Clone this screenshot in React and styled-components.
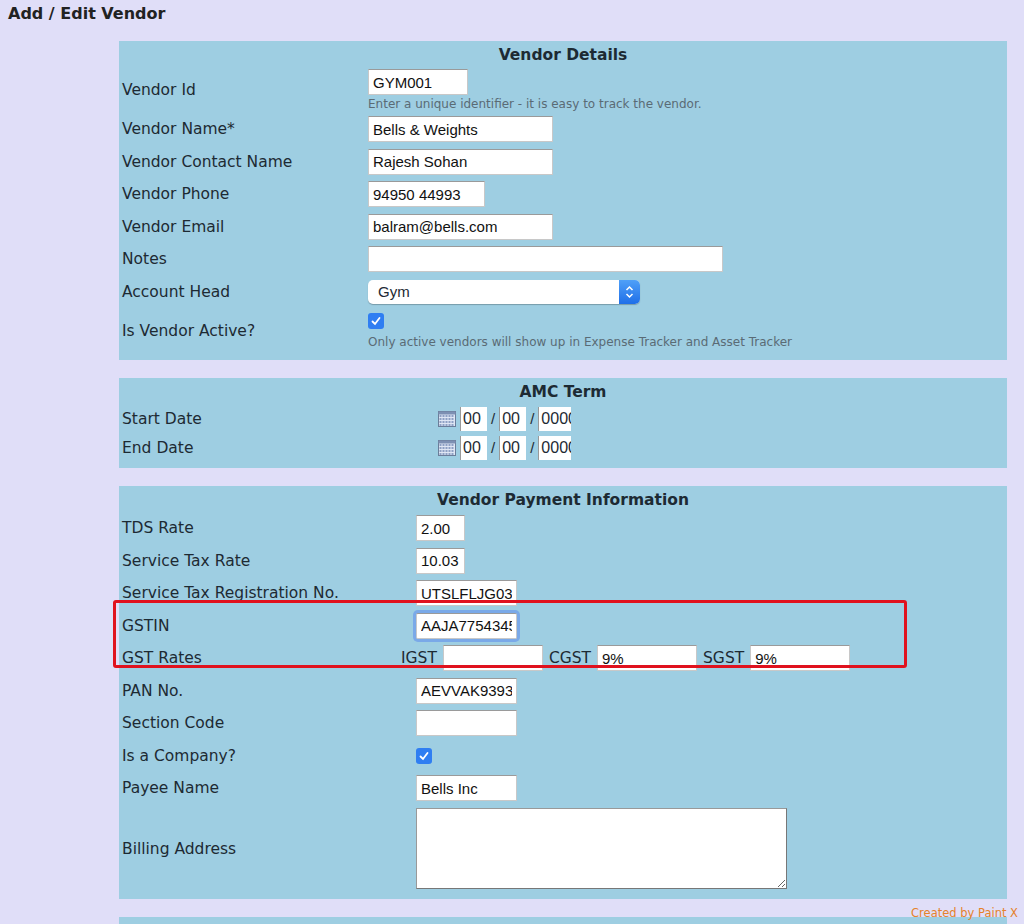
import React from 'react'
import styled, { createGlobalStyle } from 'styled-components'

const Global = createGlobalStyle`
  body {
    margin: 0;
    background: #e0def8;
    font-family: "DejaVu Sans", Verdana, sans-serif;
    color: #1d2a33;
  }
`

const Page = styled.div`
  position: relative;
  padding: 4px 0 0 8px;
  height: 920px;
  overflow: hidden;
`

const Heading = styled.div`
  font-size: 16px;
  font-weight: bold;
  color: #222;
  height: 37px;
`

const Panels = styled.div`
  margin-left: 111px;
  width: 888px;
  display: flex;
  flex-direction: column;
  gap: 18px;
`

const Panel = styled.div`
  background: #9ecee2;
  padding: 2px 3px 6px 3px;
  display: grid;
  grid-template-columns: ${p => p.labelWidth}px 1fr;
  align-items: center;
`

const Title = styled.div`
  grid-column: 1 / 3;
  text-align: center;
  font-weight: bold;
  font-size: 15.5px;
  height: 24px;
  line-height: 24px;
`

const Label = styled.div`
  font-size: 15.5px;
  min-height: ${p => p.h || 32.5}px;
  display: flex;
  align-items: center;
`

const Field = styled.div`
  display: flex;
  flex-direction: column;
  justify-content: center;
  min-height: ${p => p.h || 32.5}px;
`

const Input = styled.input`
  width: ${p => p.w}px;
  height: 26px;
  box-sizing: border-box;
  border: 1px solid #c8c8c8;
  border-top-color: #9a9a9a;
  background: #fff;
  font-family: "Liberation Sans", Arial, sans-serif;
  font-size: 15px;
  padding: 0 4px;
  color: #111;
  outline: none;
  box-shadow: ${p => (p.focus ? '0 0 0 3px #7aa9e8' : 'none')};
  border-radius: ${p => (p.focus ? '2px' : '0')};
`

const Hint = styled.div`
  font-size: 12px;
  color: #5a6b75;
  margin-top: ${p => p.mt || 2}px;
`

const Select = styled.div`
  width: 272px;
  height: 24px;
  background: #fff;
  border-radius: 5px;
  display: flex;
  align-items: center;
  justify-content: space-between;
  font-family: "Liberation Sans", Arial, sans-serif;
  font-size: 15px;
  padding-left: 10px;
  box-sizing: border-box;
  box-shadow: 0 1px 1px rgba(0, 0, 0, 0.25);
  overflow: hidden;
`

const SelectArrow = styled.div`
  width: 21px;
  height: 100%;
  background: linear-gradient(#4fa0f8, #1f6fe8);
  display: flex;
  align-items: center;
  justify-content: center;
`

const Check = styled.div`
  width: 16px;
  height: 16px;
  border-radius: 3px;
  background: #2f7ef2;
  display: flex;
  align-items: center;
  justify-content: center;
`

const DateRow = styled.div`
  display: flex;
  align-items: center;
  gap: 4px;
  font-family: "Liberation Sans", Arial, sans-serif;
  font-size: 15px;
`

const DatePart = styled.div`
  background: #fff;
  height: 24px;
  width: ${p => p.w}px;
  border-left: 1px solid #999;
  line-height: 24px;
  padding-left: 2px;
  overflow: hidden;
  font-size: 16px;
`

const Gst = styled.div`
  display: flex;
  align-items: center;
  gap: 6px;
  font-size: 15.5px;
  margin-left: -15px;
`

const TextArea = styled.textarea`
  width: 371px;
  height: 81px;
  box-sizing: border-box;
  border: 1px solid #999;
  border-right-color: #777;
  border-bottom-color: #777;
  resize: both;
`

const Highlight = styled.div`
  position: absolute;
  left: 113px;
  top: 600px;
  width: 788px;
  height: 62px;
  border: 3px solid #e0121e;
  border-radius: 3px;
  pointer-events: none;
`

const Credit = styled.div`
  position: absolute;
  right: 6px;
  top: 906px;
  font-size: 11.5px;
  color: #e5822c;
`

const Tick = () => (
  <Check>
    <svg width='12' height='12' viewBox='0 0 12 12'>
      <path d='M2.5 6.5 L5 9 L9.5 3' stroke='#fff' strokeWidth='1.8' fill='none' strokeLinecap='round' />
    </svg>
  </Check>
)

const CalIcon = () => (
  <svg width='18' height='16' viewBox='0 0 18 16'>
    <rect x='0.5' y='0.5' width='17' height='15' fill='#dfe6f4' stroke='#6b7d99' />
    <rect x='0.5' y='0.5' width='17' height='3' fill='#7d90b3' />
    {[4, 7, 10, 13].map(y =>
      [3, 6, 9, 12, 15].map(x => (
        <rect key={x + '-' + y} x={x - 1.5} y={y} width='2' height='2' fill='#8ea0c4' />
      ))
    )}
  </svg>
)

const DateField = () => (
  <DateRow>
    <CalIcon />
    <DatePart w={24}>00</DatePart>
    <span>/</span>
    <DatePart w={24}>00</DatePart>
    <span>/</span>
    <DatePart w={30}>0000</DatePart>
  </DateRow>
)

export default function App () {
  return (
    <Page>
      <Global />
      <Heading>Add / Edit Vendor</Heading>
      <Panels>
        <Panel labelWidth={246}>
          <Title>Vendor Details</Title>
          <Label h={46}>Vendor Id</Label>
          <Field h={46}>
            <Input w={100} defaultValue='GYM001' />
            <Hint>Enter a unique identifier - it is easy to track the vendor.</Hint>
          </Field>
          <Label>Vendor Name*</Label>
          <Field><Input w={185} defaultValue='Bells & Weights' /></Field>
          <Label>Vendor Contact Name</Label>
          <Field><Input w={185} defaultValue='Rajesh Sohan' /></Field>
          <Label>Vendor Phone</Label>
          <Field><Input w={117} defaultValue='94950 44993' /></Field>
          <Label>Vendor Email</Label>
          <Field><Input w={185} defaultValue='balram@bells.com' /></Field>
          <Label>Notes</Label>
          <Field><Input w={355} defaultValue='' /></Field>
          <Label>Account Head</Label>
          <Field>
            <Select>
              Gym
              <SelectArrow>
                <svg width='9' height='14' viewBox='0 0 9 14'>
                  <path d='M1.5 5 L4.5 2 L7.5 5 M1.5 9 L4.5 12 L7.5 9' stroke='#fff' strokeWidth='1.5' fill='none' />
                </svg>
              </SelectArrow>
            </Select>
          </Field>
          <Label h={46}>Is Vendor Active?</Label>
          <Field h={46}>
            <Tick />
            <Hint mt={6}>Only active vendors will show up in Expense Tracker and Asset Tracker</Hint>
          </Field>
        </Panel>

        <Panel labelWidth={316}>
          <Title>AMC Term</Title>
          <Label h={29}>Start Date</Label>
          <Field h={29}><DateField /></Field>
          <Label h={29}>End Date</Label>
          <Field h={29}><DateField /></Field>
        </Panel>

        <Panel labelWidth={294}>
          <Title>Vendor Payment Information</Title>
          <Label>TDS Rate</Label>
          <Field><Input w={49} defaultValue='2.00' /></Field>
          <Label>Service Tax Rate</Label>
          <Field><Input w={49} defaultValue='10.03' /></Field>
          <Label>Service Tax Registration No.</Label>
          <Field><Input w={101} defaultValue='UTSLFLJG03' /></Field>
          <Label>GSTIN</Label>
          <Field><Input w={101} focus defaultValue='AAJA7754345' /></Field>
          <Label>GST Rates</Label>
          <Field>
            <Gst>
              <span>IGST</span>
              <Input w={100} defaultValue='' />
              <span>CGST</span>
              <Input w={100} defaultValue='9%' />
              <span>SGST</span>
              <Input w={100} defaultValue='9%' />
            </Gst>
          </Field>
          <Label>PAN No.</Label>
          <Field><Input w={101} defaultValue='AEVVAK9393' /></Field>
          <Label>Section Code</Label>
          <Field><Input w={101} defaultValue='' /></Field>
          <Label>Is a Company?</Label>
          <Field><Tick /></Field>
          <Label>Payee Name</Label>
          <Field><Input w={101} defaultValue='Bells Inc' /></Field>
          <Label h={88}>Billing Address</Label>
          <Field h={88}><TextArea /></Field>
        </Panel>

        <Panel labelWidth={294}>
          <Title>Vendor Bank Details</Title>
        </Panel>
      </Panels>
      <Highlight />
      <Credit>Created by Paint X</Credit>
    </Page>
  )
}
